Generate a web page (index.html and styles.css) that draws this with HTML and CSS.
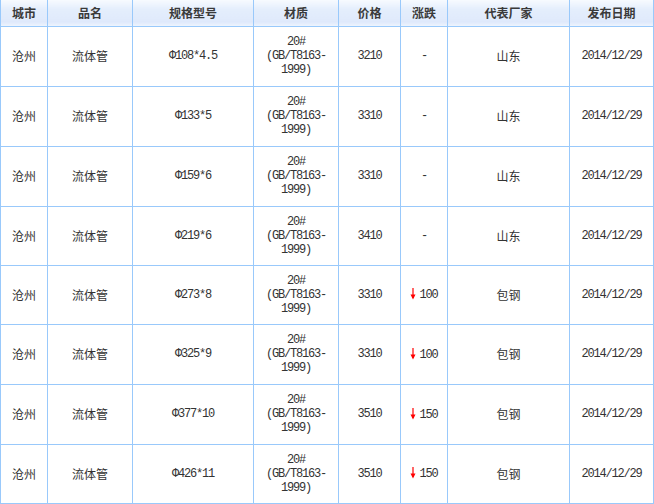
FILE: index.html
```html
<!DOCTYPE html>
<html lang="zh">
<head>
<meta charset="utf-8">
<title>价格表</title>
<link rel="stylesheet" href="styles.css">
</head>
<body>
<table class="price">
<colgroup>
<col class="c1"><col class="c2"><col class="c3"><col class="c4"><col class="c5"><col class="c6"><col class="c7"><col class="c8">
</colgroup>
<thead>
<tr class="head"><th>城市</th><th>品名</th><th>规格型号</th><th>材质</th><th>价格</th><th>涨跌</th><th>代表厂家</th><th>发布日期</th></tr>
</thead>
<tbody>
<tr class="r60"><td>沧州</td><td>流体管</td><td class="m">Φ108*4.5</td><td class="m">20#<br>(GB/T8163-<br>1999)</td><td class="m">3210</td><td class="m">-</td><td>山东</td><td class="m">2014/12/29</td></tr>
<tr class="r60"><td>沧州</td><td>流体管</td><td class="m">Φ133*5</td><td class="m">20#<br>(GB/T8163-<br>1999)</td><td class="m">3310</td><td class="m">-</td><td>山东</td><td class="m">2014/12/29</td></tr>
<tr class="r60"><td>沧州</td><td>流体管</td><td class="m">Φ159*6</td><td class="m">20#<br>(GB/T8163-<br>1999)</td><td class="m">3310</td><td class="m">-</td><td>山东</td><td class="m">2014/12/29</td></tr>
<tr class="r59"><td>沧州</td><td>流体管</td><td class="m">Φ219*6</td><td class="m">20#<br>(GB/T8163-<br>1999)</td><td class="m">3410</td><td class="m">-</td><td>山东</td><td class="m">2014/12/29</td></tr>
<tr class="r59"><td>沧州</td><td>流体管</td><td class="m">Φ273*8</td><td class="m">20#<br>(GB/T8163-<br>1999)</td><td class="m">3310</td><td class="m"><svg class="down" width="6" height="13" viewBox="0 0 6 13"><path d="M3 1V11" stroke="#f00" stroke-width="1.2"/><path d="M0.5 7.5L3 12.5L5.5 7.5Z" fill="#f00"/></svg>100</td><td>包钢</td><td class="m">2014/12/29</td></tr>
<tr class="r60"><td>沧州</td><td>流体管</td><td class="m">Φ325*9</td><td class="m">20#<br>(GB/T8163-<br>1999)</td><td class="m">3310</td><td class="m"><svg class="down" width="6" height="13" viewBox="0 0 6 13"><path d="M3 1V11" stroke="#f00" stroke-width="1.2"/><path d="M0.5 7.5L3 12.5L5.5 7.5Z" fill="#f00"/></svg>100</td><td>包钢</td><td class="m">2014/12/29</td></tr>
<tr class="r60"><td>沧州</td><td>流体管</td><td class="m">Φ377*10</td><td class="m">20#<br>(GB/T8163-<br>1999)</td><td class="m">3510</td><td class="m"><svg class="down" width="6" height="13" viewBox="0 0 6 13"><path d="M3 1V11" stroke="#f00" stroke-width="1.2"/><path d="M0.5 7.5L3 12.5L5.5 7.5Z" fill="#f00"/></svg>150</td><td>包钢</td><td class="m">2014/12/29</td></tr>
<tr class="r59"><td>沧州</td><td>流体管</td><td class="m">Φ426*11</td><td class="m">20#<br>(GB/T8163-<br>1999)</td><td class="m">3510</td><td class="m"><svg class="down" width="6" height="13" viewBox="0 0 6 13"><path d="M3 1V11" stroke="#f00" stroke-width="1.2"/><path d="M0.5 7.5L3 12.5L5.5 7.5Z" fill="#f00"/></svg>150</td><td>包钢</td><td class="m">2014/12/29</td></tr>
</tbody>
</table>
</body>
</html>
```
FILE: styles.css
```css
html, body {
  margin: 0;
  padding: 0;
  background: #fff;
}

.price {
  border-collapse: collapse;
  table-layout: fixed;
  width: 654px;
  font-family: "Noto Sans CJK SC", sans-serif;
  font-size: 12px;
  color: #333;
}

.c1 { width: 47px; }
.c2 { width: 85px; }
.c3 { width: 121px; }
.c4 { width: 85px; }
.c5 { width: 62px; }
.c6 { width: 47px; }
.c7 { width: 122px; }
.c8 { width: 84px; }

.price th,
.price td {
  border: 1px solid #99c9fb;
  padding: 0;
  text-align: center;
  vertical-align: middle;
  line-height: 14px;
}

.price thead th {
  border-top: none;
  font-weight: bold;
  color: #3a3a3a;
  background: linear-gradient(#f7faff 0%, #e4eefc 35%, #dfe9fb 85%, #eef4fd 100%);
}

.head { height: 26px; }
.r60 { height: 60px; }
.r59 { height: 59px; }

.m {
  font-family: "Liberation Mono", "Noto Sans CJK SC", monospace;
  font-size: 12px;
  letter-spacing: -1.2px;
  color: #333;
}

.down {
  display: inline-block;
  vertical-align: -2px;
  margin-right: 3px;
}
```
